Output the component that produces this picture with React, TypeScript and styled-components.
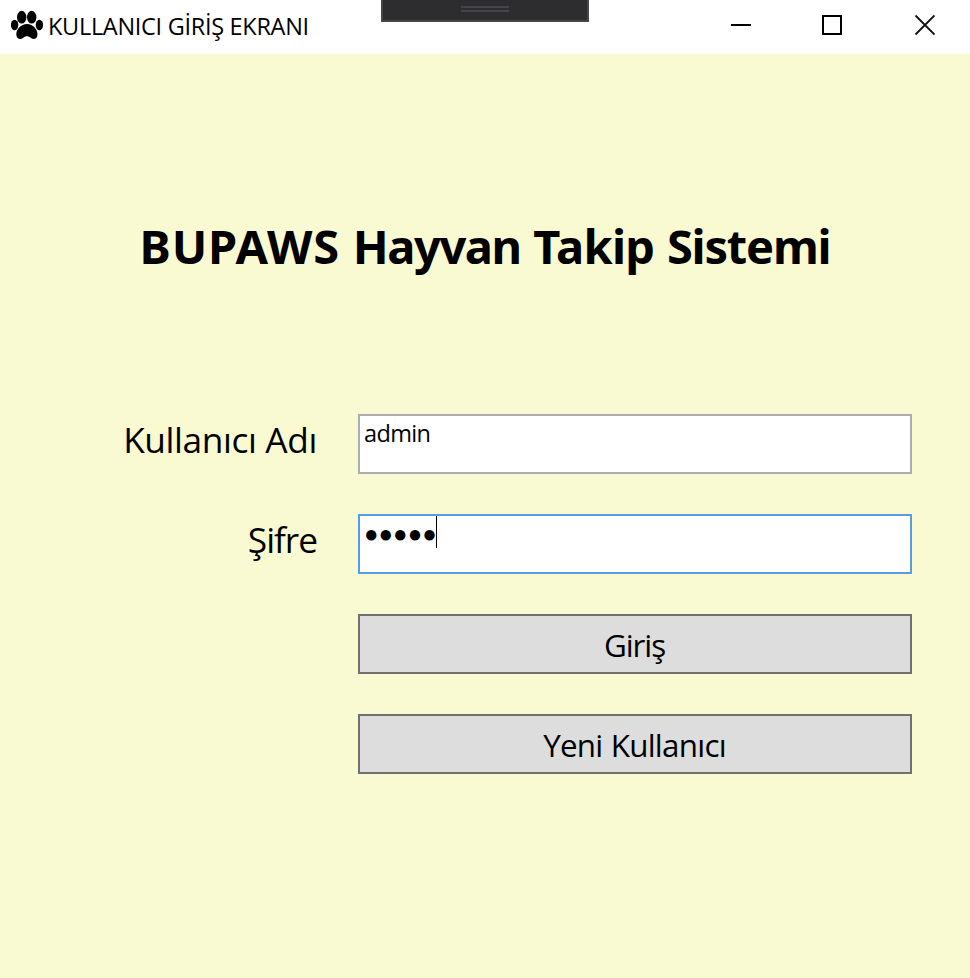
import React from "react";
import styled, { createGlobalStyle } from "styled-components";

const GlobalStyle = createGlobalStyle`
  *, *::before, *::after { box-sizing: border-box; }
  body { margin: 0; background: #fafad2; }
`;

const Window = styled.div`
  display: flex;
  flex-direction: column;
  width: 970px;
  height: 978px;
  overflow: hidden;
  background: #fafad2;
  color: #000;
  font-family: "Open Sans", "Noto Sans", sans-serif;
`;

const TitleBar = styled.header`
  position: relative;
  display: flex;
  align-items: flex-start;
  flex: none;
  height: 54px;
  padding-left: 11px;
  background: #fff;
`;

const PawIcon = styled.svg`
  flex: none;
  width: 32px;
  height: 30px;
  margin-top: 10px;
`;

const TitleText = styled.div`
  flex: 1;
  padding-left: 5px;
  font-size: 23.5px;
  line-height: 52px;
  letter-spacing: -0.3px;
  white-space: nowrap;
`;

const WindowControls = styled.div`
  display: flex;
`;

const ControlButton = styled.button`
  display: flex;
  justify-content: center;
  width: 92px;
  height: 50px;
  padding: 14px 0 0;
  border: 0;
  background: transparent;
`;

/* Debug toolbar handle docked over the top edge of the window. */
const DockHandle = styled.div`
  position: absolute;
  top: 0;
  left: 381px;
  display: flex;
  flex-direction: column;
  align-items: center;
  gap: 2px;
  width: 208px;
  height: 22px;
  padding-top: 6px;
  border: 2px solid #46464a;
  border-top: 0;
  background: #2d2d30;
`;

const Grip = styled.span`
  width: 48px;
  height: 2px;
  background: #46464a;
`;

const Content = styled.main`
  flex: 1;
`;

const Heading = styled.h1`
  margin: 0;
  padding-top: 160px;
  font-family: "Noto Sans", sans-serif;
  font-size: 47px;
  font-weight: 700;
  line-height: 64px;
  word-spacing: 0.4px;
  text-align: center;
  white-space: nowrap;
`;

const Word = styled.span<{ $tracking: number }>`
  letter-spacing: ${(p) => p.$tracking}px;
`;

const Form = styled.div`
  display: grid;
  grid-template-columns: 317px 554px;
  grid-auto-rows: 60px;
  column-gap: 41px;
  row-gap: 40px;
  margin-top: 136px;
`;

const Label = styled.label<{ $tracking: number }>`
  font-size: 35.3px;
  line-height: 51px;
  letter-spacing: ${(p) => p.$tracking}px;
  text-align: right;
  white-space: nowrap;
`;

const Field = styled.div<{ $focused?: boolean }>`
  display: flex;
  align-items: flex-start;
  padding-left: 4px;
  border: 2px solid ${(p) => (p.$focused ? "#569de5" : "#abadb3")};
  background: #fff;
`;

const FieldText = styled.span`
  font-size: 23.5px;
  line-height: 34px;
  letter-spacing: -0.65px;
`;

const Password = styled.span`
  font-family: "Liberation Sans", sans-serif;
  font-size: 24px;
  line-height: 36px;
  letter-spacing: 0.05px;
`;

const Caret = styled.span`
  width: 1px;
  height: 32px;
  margin-left: -1px;
  background: #000;
`;

const Button = styled.button<{ $tracking: number }>`
  grid-column: 2;
  padding: 2px 1px 0 0;
  border: 2px solid #707070;
  border-radius: 0;
  background: #ddd;
  color: #000;
  font-family: inherit;
  font-size: 31.4px;
  line-height: 54px;
  letter-spacing: ${(p) => p.$tracking}px;
  word-spacing: 0.8px;
`;

export default function App() {
  return (
    <Window>
      <GlobalStyle />
      <TitleBar>
        <PawIcon viewBox="11 10 32 30" aria-hidden="true">
          <ellipse cx="14.6" cy="25" rx="3.7" ry="5.2" />
          <ellipse cx="21.7" cy="17.2" rx="4.7" ry="6.4" />
          <ellipse cx="31.7" cy="17.2" rx="4.7" ry="6.4" />
          <ellipse cx="39.4" cy="25" rx="3.7" ry="5.2" />
          <path d="M27 24C33 24 37.500 29.500 37.500 34.200C37.500 37.200 36 39 33.500 39C31 39 30 36.300 27 36.300C24 36.300 23 39 20.500 39C18 39 16.300 37.200 16.300 34.200C16.300 29.500 21 24 27 24Z" />
        </PawIcon>
        <TitleText>KULLANICI GİRİŞ EKRANI</TitleText>
        <WindowControls>
          <ControlButton aria-label="Simge durumuna küçült">
            <svg width="22" height="22" shapeRendering="crispEdges">
              <rect x="2" y="10" width="20" height="2" />
            </svg>
          </ControlButton>
          <ControlButton aria-label="Ekranı kapla">
            <svg width="22" height="22">
              <rect x="2" y="2" width="18" height="18" fill="none" stroke="#000" strokeWidth="2" />
            </svg>
          </ControlButton>
          <ControlButton aria-label="Kapat">
            <svg width="22" height="22">
              <path d="M2.500 1.500L21.500 20.500M21.500 1.500L2.500 20.500" stroke="#111" strokeWidth="1.900" />
            </svg>
          </ControlButton>
        </WindowControls>
        <DockHandle>
          <Grip />
          <Grip />
        </DockHandle>
      </TitleBar>
      <Content>
        <Heading>
          <Word $tracking={0.8}>BUPAWS</Word> <Word $tracking={-1.4}>Hayvan</Word>{" "}
          <Word $tracking={-0.7}>Takip</Word> <Word $tracking={-1.2}>Sistemi</Word>
        </Heading>
        <Form>
          <Label $tracking={-0.4}>Kullanıcı Adı</Label>
          <Field>
            <FieldText>admin</FieldText>
          </Field>
          <Label $tracking={-1.05}>Şifre</Label>
          <Field $focused>
            <Password>●●●●●</Password>
            <Caret />
          </Field>
          <Button $tracking={-1.05}>Giriş</Button>
          <Button $tracking={-0.75}>Yeni Kullanıcı</Button>
        </Form>
      </Content>
    </Window>
  );
}
